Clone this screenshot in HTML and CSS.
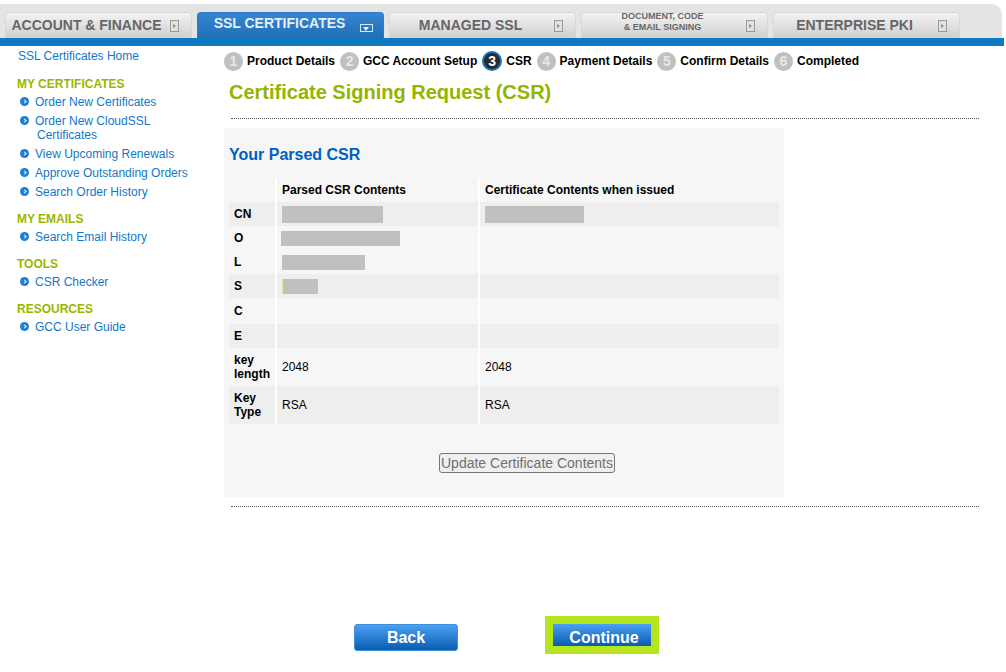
FILE: index.html
```html
<!DOCTYPE html>
<html lang="en">
<head>
    <meta charset="UTF-8">
    <meta name="viewport" content="width=device-width, initial-scale=1.0">
    <title>Certificate Signing Request (CSR)</title>
    <link rel="stylesheet" href="styles.css">
</head>
<body>
    <!-- Top navigation -->
    <nav class="tabs">
        <a class="tab"><span class="tab-label tab-label-left">ACCOUNT &amp; FINANCE</span><span class="tab-arrow"></span></a>
        <a class="tab tab-active"><span class="tab-label">SSL CERTIFICATES</span><span class="tab-arrow"></span></a>
        <a class="tab"><span class="tab-label">MANAGED SSL</span><span class="tab-arrow"></span></a>
        <a class="tab"><span class="tab-label tab-label-small">DOCUMENT, CODE<br>&amp; EMAIL SIGNING</span><span class="tab-arrow"></span></a>
        <a class="tab"><span class="tab-label">ENTERPRISE PKI</span><span class="tab-arrow"></span></a>
    </nav>
    <div class="nav-line"></div>

    <div class="layout">
        <!-- Side menu -->
        <aside class="sidebar">
            <a class="home-link">SSL Certificates Home</a>

            <h3>MY CERTIFICATES</h3>
            <ul>
                <li><a>Order New Certificates</a></li>
                <li><a>Order New CloudSSL<br><span class="wrapped">Certificates</span></a></li>
                <li><a>View Upcoming Renewals</a></li>
                <li><a>Approve Outstanding Orders</a></li>
                <li><a>Search Order History</a></li>
            </ul>

            <h3>MY EMAILS</h3>
            <ul>
                <li><a>Search Email History</a></li>
            </ul>

            <h3>TOOLS</h3>
            <ul>
                <li><a>CSR Checker</a></li>
            </ul>

            <h3>RESOURCES</h3>
            <ul>
                <li><a>GCC User Guide</a></li>
            </ul>
        </aside>

        <main class="content">
            <!-- Steps -->
            <ol class="steps">
                <li><span class="step-num">1</span>Product Details</li>
                <li><span class="step-num">2</span>GCC Account Setup</li>
                <li><span class="step-num step-current">3</span>CSR</li>
                <li><span class="step-num">4</span>Payment Details</li>
                <li><span class="step-num">5</span>Confirm Details</li>
                <li><span class="step-num">6</span>Completed</li>
            </ol>

            <h1>Certificate Signing Request (CSR)</h1>
            <div class="dotted dotted-top"></div>

            <section class="panel">
                <h2>Your Parsed CSR</h2>
                <table class="csr-table">
                    <thead>
                        <tr>
                            <th class="col-key"></th>
                            <th class="col-parsed">Parsed CSR Contents</th>
                            <th class="col-issued">Certificate Contents when issued</th>
                        </tr>
                    </thead>
                    <tbody>
                        <tr class="shade">
                            <th>CN</th>
                            <td><span class="hidden-value hv-cn"></span></td>
                            <td><span class="hidden-value hv-cn2"></span></td>
                        </tr>
                        <tr>
                            <th>O</th>
                            <td><span class="hidden-value hv-o"></span></td>
                            <td></td>
                        </tr>
                        <tr>
                            <th>L</th>
                            <td><span class="hidden-value hv-l"></span></td>
                            <td></td>
                        </tr>
                        <tr class="shade">
                            <th>S</th>
                            <td><span class="hidden-value hv-s"></span></td>
                            <td></td>
                        </tr>
                        <tr class="row-c">
                            <th>C</th>
                            <td></td>
                            <td></td>
                        </tr>
                        <tr class="shade">
                            <th>E</th>
                            <td></td>
                            <td></td>
                        </tr>
                        <tr class="row-tall">
                            <th>key length</th>
                            <td>2048</td>
                            <td>2048</td>
                        </tr>
                        <tr class="row-tall shade">
                            <th>Key Type</th>
                            <td>RSA</td>
                            <td>RSA</td>
                        </tr>
                    </tbody>
                </table>
                <div class="update-row">
                    <button class="update-button" type="button">Update Certificate Contents</button>
                </div>
            </section>

            <div class="dotted dotted-bottom"></div>

            <div class="actions">
                <button class="action-button back-button" type="button">Back</button>
                <span class="continue-box"><button class="action-button continue-button" type="button">Continue</button></span>
            </div>
        </main>
    </div>
</body>
</html>
```

FILE: styles.css
```css
/* General */
html, body {
    height: 672px;
    overflow: hidden;
}

body {
    font-family: "Liberation Sans", Arial, sans-serif;
    font-size: 12px;
    margin: 0;
    background-color: #fff;
    color: #000;
}

/* Top navigation */
.tabs {
    display: flex;
    gap: 5px;
    box-sizing: border-box;
    width: 1002px;
    height: 34px;
    margin-top: 4px;
    padding: 8px 0 0 5px;
    background: #e4e4e4;
    border-top-right-radius: 10px;
}

.tab {
    position: relative;
    display: flex;
    align-items: center;
    justify-content: center;
    box-sizing: border-box;
    width: 187px;
    height: 26px;
    padding: 0 24px 2px 0;
    background: linear-gradient(#f3f3f3, #cfcfcf);
    border: 1px solid #d8d8d8;
    border-bottom: none;
    border-radius: 4px 4px 0 0;
    color: #666;
    font-size: 14px;
    font-weight: bold;
    text-align: center;
}

.tab-label-left {
    margin-left: -5px;
    margin-right: -5px;
    white-space: nowrap;
}

.tab-label-small {
    font-size: 9px;
    line-height: 11px;
    margin-top: -5px;
}

.tab-arrow {
    position: absolute;
    top: 7px;
    right: 12px;
    box-sizing: border-box;
    width: 9px;
    height: 12px;
    background: #e2e2e2;
    border: 1px solid #999;
}

.tab-arrow::after {
    content: "";
    position: absolute;
    top: 3px;
    left: 2px;
    border-left: 3px solid #888;
    border-top: 2px solid transparent;
    border-bottom: 2px solid transparent;
}

.tab-active {
    background: linear-gradient(#3585d0, #1f70b8);
    border-color: #2c7cc6;
    color: #e4eef8;
    padding-right: 22px;
    padding-bottom: 5px;
}

.tab-active .tab-arrow {
    top: 11px;
    right: 10px;
    width: 13px;
    height: 8px;
    background: transparent;
    border-color: #dce8f4;
}

.tab-active .tab-arrow::after {
    top: 2px;
    left: 2px;
    border-left: 3.5px solid transparent;
    border-right: 3.5px solid transparent;
    border-top: 4px solid #e8f0f8;
    border-bottom: none;
}

.nav-line {
    width: 1004px;
    height: 8px;
    background: #1078c0;
}

.layout {
    display: flex;
}

/* Side menu */
.sidebar {
    box-sizing: border-box;
    width: 224px;
    padding: 3px 0 0 17px;
    color: #1078c8;
    flex: none;
}

.home-link {
    display: block;
    margin-left: 1px;
    line-height: 14px;
}

.sidebar h3 {
    margin: 14px 0 0;
    color: #9ab700;
    font-size: 12px;
    line-height: 14px;
    font-weight: bold;
}

.sidebar ul {
    list-style: none;
    margin: 0;
    padding: 3px 0 0;
}

.sidebar li {
    position: relative;
    padding: 1px 0 4px 18px;
    line-height: 14px;
}

.sidebar li::before {
    content: "";
    position: absolute;
    top: 3px;
    left: 3px;
    width: 9px;
    height: 9px;
    border-radius: 50%;
    background: #1f80d0;
}

.sidebar li::after {
    content: "";
    position: absolute;
    top: 6px;
    left: 6px;
    width: 2px;
    height: 2px;
    border-top: 1px solid #fff;
    border-right: 1px solid #fff;
    transform: rotate(45deg);
}

.sidebar ul + h3 {
    margin-top: 9px;
}

.wrapped {
    margin-left: 2px;
}

/* Main content */
.content {
    flex: 1;
}

.steps {
    display: flex;
    align-items: center;
    gap: 5px;
    list-style: none;
    margin: 0;
    padding: 5px 0 0;
    font-weight: bold;
    height: 20px;
}

.steps li {
    display: flex;
    align-items: center;
    gap: 4px;
}

.step-num {
    display: flex;
    align-items: center;
    justify-content: center;
    width: 19px;
    height: 19px;
    border-radius: 50%;
    background: #c0c0c0;
    color: #e8e8e8;
    font-size: 14px;
    font-weight: bold;
}

.step-current {
    box-sizing: border-box;
    width: 20px;
    height: 20px;
    background: #2a2a2a;
    border: 2px solid #1078c0;
    color: #fff;
}

h1 {
    margin: 8px 0 0 5px;
    color: #92b500;
    font-size: 20px;
    line-height: 26px;
    font-weight: bold;
}

.dotted {
    width: 748px;
    margin-left: 7px;
    border-top: 1px dotted #555;
}

.dotted-top {
    margin-top: 13px;
}

.dotted-bottom {
    margin-top: 9px;
}

.panel {
    box-sizing: border-box;
    width: 560px;
    height: 369px;
    margin-top: 9px;
    padding: 18px 5px 0;
    background: #f6f6f6;
}

.panel h2 {
    margin: 0;
    color: #0060c0;
    font-size: 16px;
    line-height: 18px;
    font-weight: bold;
}

/* CSR table */
.csr-table {
    width: 550px;
    margin-top: 14px;
    border-collapse: collapse;
    table-layout: fixed;
    font-size: 12px;
}

.csr-table th,
.csr-table td {
    box-sizing: border-box;
    height: 24px;
    padding: 0 4px 0 5px;
    text-align: left;
    line-height: 14px;
    vertical-align: middle;
}

.csr-table .col-key {
    width: 47px;
}

.csr-table .col-parsed {
    width: 203px;
}

.csr-table th + th,
.csr-table td {
    border-left: 2px solid #fff;
}

.csr-table tbody th {
    padding-right: 0;
}

.row-c th,
.row-c td {
    height: 26px;
}

.row-tall th,
.row-tall td {
    height: 38px;
}

.shade {
    background: #eee;
}

.hidden-value {
    display: block;
    height: 15px;
    background: #c0c0c0;
}

.hv-cn {
    width: 101px;
    height: 17px;
}

.hv-cn2 {
    width: 99px;
    height: 17px;
}

.hv-o {
    width: 119px;
    margin-left: -1px;
}

.hv-l {
    width: 83px;
}

.hv-s {
    box-sizing: border-box;
    width: 36px;
    border-left: 1px solid #e6eaa0;
}

.update-row {
    margin-top: 29px;
    padding-left: 46px;
    text-align: center;
}

.update-button {
    box-sizing: border-box;
    width: 176px;
    height: 20px;
    padding: 0;
    background: #efefef;
    border: 1px solid #777;
    border-radius: 3px;
    color: #707070;
    font-family: inherit;
    font-size: 14px;
    line-height: 18px;
}

/* Back and Continue */
.actions {
    display: flex;
    align-items: flex-start;
    margin: 109px 0 0 130px;
}

.action-button {
    box-sizing: border-box;
    padding: 0;
    border: none;
    color: #fff;
    font-family: inherit;
    font-size: 16px;
    font-weight: bold;
    background: linear-gradient(#4aa0f4, #0b5cb0);
}

.back-button {
    width: 104px;
    height: 27px;
    margin-top: 8px;
    border: 1px solid #3d8fdc;
    border-radius: 3px;
}

.continue-box {
    display: block;
    margin-left: 87px;
    padding: 8px;
    background: #b5e61d;
    line-height: 0;
}

.continue-button {
    width: 98px;
    height: 22px;
    padding: 5px 0 0 4px;
}
```
